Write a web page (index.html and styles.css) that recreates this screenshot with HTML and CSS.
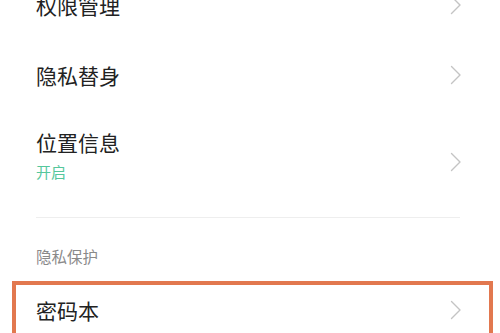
FILE: index.html
```html
<!DOCTYPE html>
<html lang="zh-CN">
<head>
<meta charset="utf-8">
<link rel="stylesheet" href="styles.css">
</head>
<body>
<div class="page">
  <div class="row row-first">
    <div class="title">权限管理</div>
    <svg class="chev" viewBox="0 0 12 20" width="12" height="20"><polyline points="1.5,1.5 10,10 1.5,18.5"/></svg>
  </div>
  <div class="row">
    <div class="title">隐私替身</div>
    <svg class="chev" viewBox="0 0 12 20" width="12" height="20"><polyline points="1.5,1.5 10,10 1.5,18.5"/></svg>
  </div>
  <div class="row row-tall">
    <div class="texts">
      <div class="title">位置信息</div>
      <div class="sub">开启</div>
    </div>
    <svg class="chev" viewBox="0 0 12 20" width="12" height="20"><polyline points="1.5,1.5 10,10 1.5,18.5"/></svg>
  </div>
  <div class="divider"></div>
  <div class="section">隐私保护</div>
  <div class="row row-marked">
    <div class="title">密码本</div>
    <svg class="chev" viewBox="0 0 12 20" width="12" height="20"><polyline points="1.5,1.5 10,10 1.5,18.5"/></svg>
  </div>
</div>
</body>
</html>
```
FILE: styles.css
```css
html, body {
  margin: 0;
  padding: 0;
  background: #ffffff;
  overflow: hidden;
}
body {
  width: 500px;
  height: 333px;
  font-family: "Noto Sans CJK SC", "Noto Sans", sans-serif;
  color: #222222;
}
.page {
  margin-top: -30px;
}
.row {
  display: flex;
  align-items: center;
  justify-content: space-between;
  height: 70px;
  padding: 0 38px 0 36px;
  box-sizing: border-box;
}
.title {
  font-size: 21px;
  line-height: 24px;
  color: #222222;
}
.row-tall {
  height: auto;
  align-items: flex-start;
  padding-top: 20px;
  padding-bottom: 35px;
}
.row-tall .chev {
  margin-top: 22px;
}
.sub {
  margin-top: 8px;
  font-size: 15px;
  line-height: 20px;
  color: #55c79c;
}
.chev {
  flex: none;
  fill: none;
  stroke: #c4c4c4;
  stroke-width: 1.4;
  stroke-linecap: round;
  stroke-linejoin: round;
}
.divider {
  height: 1px;
  background: #eeeeee;
  margin: 0 40px 0 36px;
}
.section {
  margin-top: 28px;
  padding-left: 36px;
  font-size: 15.5px;
  line-height: 20px;
  color: #8a8a8a;
}
.row-marked {
  position: relative;
  margin-top: 15px;
  height: 52px;
  align-items: flex-start;
  padding-top: 17px;
}
.row-marked .chev {
  margin-top: 2px;
}
.row-marked::before {
  content: "";
  position: absolute;
  left: 12px;
  top: 0;
  width: 481px;
  height: 52px;
  border: 4.5px solid #e2784f;
  border-bottom: none;
  box-sizing: border-box;
}
```
